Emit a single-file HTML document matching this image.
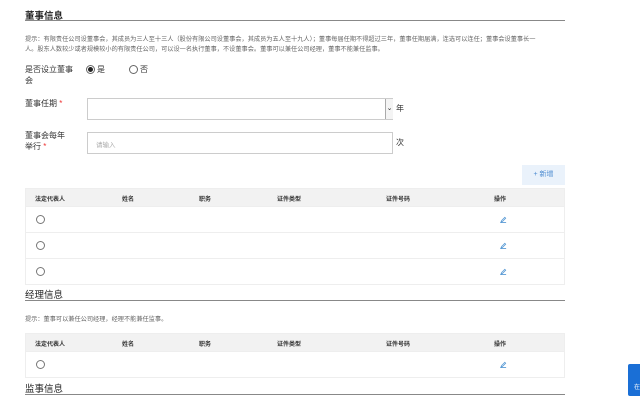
<!DOCTYPE html>
<html><head><meta charset="utf-8"><style>
*{margin:0;padding:0;box-sizing:border-box}
body{width:640px;height:403px;background:#fff;font-family:"Liberation Sans","Noto Sans CJK SC",sans-serif;color:#333;position:relative;overflow:hidden}
.a{position:absolute}
.title{font-size:9.5px;font-weight:bold;color:#222;left:25px}
.line{left:25px;width:540px;height:1px;background:#888}
.hint{font-size:6.2px;color:#666;left:25px;width:560px;line-height:10px;white-space:nowrap}
.lbl{font-size:8px;color:#333;line-height:11px}
.star{color:#e33}
.box{border:1px solid #ccc;background:#fff}
.rad{width:9px;height:9px;border:1px solid #666;border-radius:50%}
.th{background:#f2f2f2;left:25px;width:540px;height:19px;border:1px solid #eee}
.th span{position:absolute;top:5px;font-size:6px;font-weight:bold;color:#333}
.row{left:25px;width:540px;border:1px solid #eee;border-top:none}
.row .rad{position:absolute;left:10px;top:8px;border-color:#777}
.pen{position:absolute;left:474px;top:9px;width:7px;height:7px}
</style></head><body>
<div class="a title" style="top:8px">董事信息</div>
<div class="a line" style="top:20px"></div>
<div class="a hint" style="top:35px">提示：有限责任公司设董事会，其成员为三人至十三人（股份有限公司设董事会，其成员为五人至十九人）；董事每届任期不得超过三年，董事任期届满，连选可以连任；董事会设董事长一<br>人。股东人数较少或者规模较小的有限责任公司，可以设一名执行董事，不设董事会。董事可以兼任公司经理，董事不能兼任监事。</div>
<div class="a lbl" style="left:25px;top:64px;width:50px">是否设立董事会</div>
<div class="a rad" style="left:86px;top:65px"><div style="width:5px;height:5px;background:#222;border-radius:50%;margin:1px"></div></div>
<div class="a lbl" style="left:97px;top:64px">是</div>
<div class="a rad" style="left:129px;top:65px"></div>
<div class="a lbl" style="left:140px;top:64px">否</div>
<div class="a lbl" style="left:25px;top:98px">董事任期 <span class="star">*</span></div>
<div class="a box" style="left:87px;top:98px;width:306px;height:22px"></div>
<div class="a" style="left:385px;top:99px;width:8px;height:20px;border-left:1px solid #aaa;background:#f4f4f4;font-size:7px;line-height:20px;text-align:center">⌄</div>
<div class="a lbl" style="left:396px;top:103px">年</div>
<div class="a lbl" style="left:25px;top:130px;width:45px">董事会每年举行 <span class="star">*</span></div>
<div class="a box" style="left:87px;top:132px;width:306px;height:22px;font-size:6.5px;color:#aaa;padding:6px 8px">请输入</div>
<div class="a lbl" style="left:396px;top:137px">次</div>
<div class="a" style="left:522px;top:165px;width:43px;height:20px;background:#eaf2fb;color:#4a8ad0;font-size:7px;line-height:20px;text-align:center">+ 新增</div>
<div class="a th" style="top:188px"><span style="left:9px">法定代表人</span><span style="left:96px">姓名</span><span style="left:173px">职务</span><span style="left:251px">证件类型</span><span style="left:360px">证件号码</span><span style="left:468px">操作</span></div>
<div class="a row" style="top:207px;height:26px"><div class="rad"></div><svg class="pen" viewBox="0 0 8 8"><path d="M1 7L2 5L5.5 1.5L6.5 2.5L3 6Z M1 7.5H7" fill="none" stroke="#5b9bd5" stroke-width="0.9"/></svg></div>
<div class="a row" style="top:233px;height:26px"><div class="rad"></div><svg class="pen" viewBox="0 0 8 8"><path d="M1 7L2 5L5.5 1.5L6.5 2.5L3 6Z M1 7.5H7" fill="none" stroke="#5b9bd5" stroke-width="0.9"/></svg></div>
<div class="a row" style="top:259px;height:26px"><div class="rad"></div><svg class="pen" viewBox="0 0 8 8"><path d="M1 7L2 5L5.5 1.5L6.5 2.5L3 6Z M1 7.5H7" fill="none" stroke="#5b9bd5" stroke-width="0.9"/></svg></div>
<div class="a title" style="top:287px;font-weight:normal">经理信息</div>
<div class="a line" style="top:300px"></div>
<div class="a hint" style="top:315px">提示：董事可以兼任公司经理，经理不能兼任监事。</div>
<div class="a th" style="top:333px"><span style="left:9px">法定代表人</span><span style="left:96px">姓名</span><span style="left:173px">职务</span><span style="left:251px">证件类型</span><span style="left:360px">证件号码</span><span style="left:468px">操作</span></div>
<div class="a row" style="top:352px;height:26px"><div class="rad"></div><svg class="pen" viewBox="0 0 8 8"><path d="M1 7L2 5L5.5 1.5L6.5 2.5L3 6Z M1 7.5H7" fill="none" stroke="#5b9bd5" stroke-width="0.9"/></svg></div>
<div class="a title" style="top:381px;font-weight:normal">监事信息</div>
<div class="a line" style="top:394px"></div>
<div class="a" style="left:628px;top:364px;width:12px;height:32px;background:#1a6fd6;border-radius:2px 0 0 2px;color:#fff;font-size:6px;padding:18px 0 0 6px;overflow:hidden">在</div>
</body></html>
